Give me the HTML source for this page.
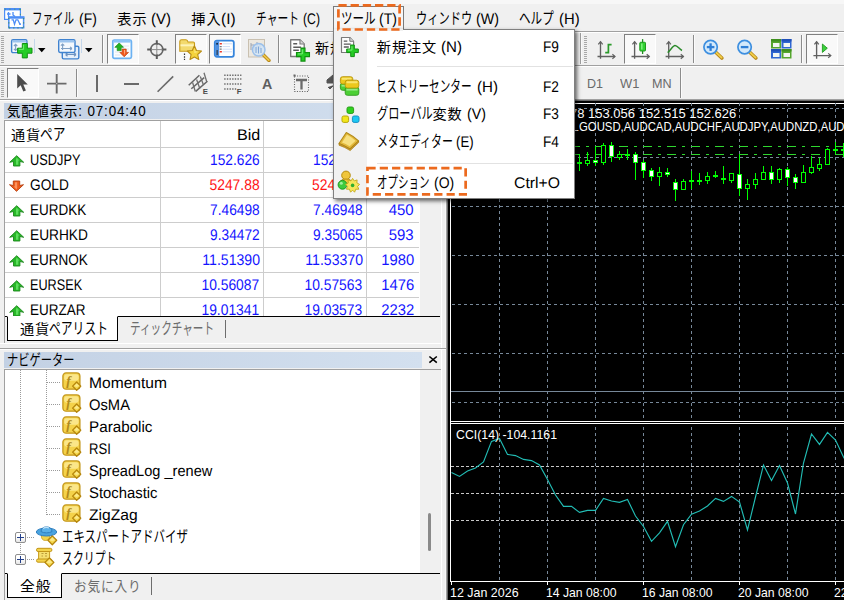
<!DOCTYPE html>
<html lang="ja"><head><meta charset="utf-8"><title>MetaTrader 4</title>
<style>
html,body{margin:0;padding:0}
body{width:844px;height:600px;position:relative;overflow:hidden;background:#f0f0f0;font-family:"Liberation Sans", "Noto Sans CJK JP", sans-serif;}
body div, body svg{position:absolute;box-sizing:border-box}
.t{position:absolute;white-space:nowrap;line-height:24px;height:24px;display:block}
#chart .t{font-family:"Liberation Sans","DejaVu Sans",sans-serif}
</style></head><body>
<div style="left:0px;top:0px;width:844px;height:4px;background:#f7f7f7"></div>
<div style="left:0px;top:31px;width:844px;height:1px;background:#a0a0a0"></div>
<div style="left:0px;top:32px;width:844px;height:1px;background:#fff"></div>
<div style="left:0px;top:65px;width:844px;height:1px;background:#a0a0a0"></div>
<div style="left:0px;top:66px;width:844px;height:1px;background:#fff"></div>
<div style="left:0px;top:99px;width:844px;height:1px;background:#a0a0a0"></div>
<div style="left:0px;top:100px;width:448px;height:1px;background:#fff"></div>
<span id="t0" class="t" style="left:32.4px;top:6.5px;font-size:15.6px;color:#000;transform:scaleX(0.6732);transform-origin:left center;">ファイル</span>
<span id="t1" class="t" style="left:78.6px;top:6.5px;font-size:15.4px;color:#000;transform:scaleX(0.9046) skewX(0.05deg);transform-origin:left center;">(F)</span>
<span id="t2" class="t" style="left:117.3px;top:6.5px;font-size:14.2px;color:#000;letter-spacing:0.9px;">表示</span>
<span id="t3" class="t" style="left:151.1px;top:6.5px;font-size:15.4px;color:#000;transform:scaleX(0.9731) skewX(0.05deg);transform-origin:left center;">(V)</span>
<span id="t4" class="t" style="left:191.3px;top:6.5px;font-size:14.2px;color:#000;letter-spacing:0.9px;">挿入</span><span id="t5" class="t" style="left:221px;top:6.5px;font-size:15.4px;color:#000;transform:scaleX(1.0033) skewX(0.05deg);transform-origin:left center;">(I)</span>
<span id="t6" class="t" style="left:255.5px;top:6.5px;font-size:15.6px;color:#000;transform:scaleX(0.6909);transform-origin:left center;">チャート</span>
<span id="t7" class="t" style="left:302.6px;top:6.5px;font-size:15.4px;color:#000;transform:scaleX(0.7945) skewX(0.05deg);transform-origin:left center;">(C)</span>
<span id="t8" class="t" style="left:415.8px;top:6.5px;font-size:15.6px;color:#000;transform:scaleX(0.7207);transform-origin:left center;">ウィンドウ</span>
<span id="t9" class="t" style="left:475.6px;top:6.5px;font-size:15.4px;color:#000;transform:scaleX(0.9273) skewX(0.05deg);transform-origin:left center;">(W)</span>
<span id="t10" class="t" style="left:519px;top:6.5px;font-size:15.6px;color:#000;transform:scaleX(0.7436);transform-origin:left center;">ヘルプ</span>
<span id="t11" class="t" style="left:558.6px;top:6.5px;font-size:15.4px;color:#000;transform:scaleX(0.9628) skewX(0.05deg);transform-origin:left center;">(H)</span>
<svg style="left:3px;top:6px" width="23" height="24" viewBox="0 0 23 24" ><rect x="1.600" y="2.600" width="15.800" height="10.800" fill="#fff" stroke="#4d8df6" stroke-width="1.200"/><rect x="1" y="2" width="17" height="2.400" fill="#4d8df6"/><path d="M1.600 3.200 H17.400 M17.400 3 V13" stroke="#3f9a7a" stroke-width="1" stroke-dasharray="1.200 3.600" fill="none"/><path d="M5.500 6 V11 M4 8 H7.500 M10 6 V9 L12 10.500" stroke="#4d8df6" stroke-width="1.300" fill="none"/><rect x="5.800" y="11.200" width="14.800" height="10.600" fill="#fff" stroke="#4d8df6" stroke-width="1.500"/><rect x="5" y="10.400" width="16.400" height="2.300" fill="#4d8df6"/><path d="M5.800 12 V22 M20.600 12 V22 M6 21.800 H20.500" stroke="#3f8f7a" stroke-width="1.200" stroke-dasharray="1.200 3" fill="none"/><path d="M8.500 13.800 H10.300 L11.500 18.300 L13 13.800 H14.800 L16.800 18" stroke="#4d8df6" stroke-width="1.300" fill="none"/><rect x="16.200" y="17.300" width="1.700" height="1.700" fill="#4d8df6"/></svg>
<div style="left:1px;top:36px;width:3px;height:27px;background:repeating-linear-gradient(180deg,#a8a8a8 0 1px,transparent 1px 2px)"></div>
<svg style="left:10px;top:38px" width="24" height="22" viewBox="0 0 24 22" ><rect x="1.600" y="1.800" width="15.300" height="12.800" rx="1.400" fill="#f4f8fd" stroke="#3f82cf" stroke-width="1.400"/><rect x="2.300" y="2.300" width="14" height="2.200" fill="#9cc4ee"/><path d="M5.600 6.300 V12.300 M3.900 8 L5.600 6.300 L7.300 8 M3.900 10.800 L5.600 12.500 L7.300 10.800" stroke="#7f9fc4" stroke-width="1.100" fill="none"/><path d="M12.3 5.499999999999999 h5 v4.7 h4.7 v5 h-4.7 v4.7 h-5 v-4.7 h-4.7 v-5 h4.7 z" fill="#25cc25" stroke="#109010" stroke-width="1"/><path d="M13.5 6.699999999999999 v4.7 M8.8 11.399999999999999 h4.7" stroke="#7df07d" stroke-width="1.200" fill="none" opacity=".8"/></svg>
<div style="left:34px;top:39px;width:1px;height:14px;background:#c4d6ea"></div>
<svg style="left:38px;top:48px" width="8" height="5" viewBox="0 0 8 5" ><path d="M0 0 H7.500 L3.750 4.200Z" fill="#000"/></svg>
<svg style="left:57px;top:38px" width="24" height="23" viewBox="0 0 24 23" ><rect x="5.300" y="8.200" width="16.500" height="12.700" rx="1.400" fill="#e6f0fb" stroke="#3f82cf" stroke-width="1.400"/><path d="M8.500 16.500 H19 M8.500 16.500 l2 -1.700 M8.500 16.500 l2 1.700 M19 16.500 l-2 -1.700 M19 16.500 l-2 1.700" stroke="#6f93c0" stroke-width="1.200" fill="none"/><rect x="1.700" y="1.800" width="16.300" height="12.700" rx="1.400" fill="#f4f8fd" stroke="#3f82cf" stroke-width="1.400"/><rect x="2.400" y="2.300" width="15" height="2.200" fill="#9cc4ee"/><path d="M5.600 6 V12 M3.900 7.700 L5.600 6 L7.300 7.700 M4 10.500 H15 M15 10.500 l-2 -1.700 M15 10.500 l-2 1.700" stroke="#7f9fc4" stroke-width="1.100" fill="none"/></svg>
<div style="left:81px;top:39px;width:1px;height:14px;background:#c4d6ea"></div>
<svg style="left:85px;top:48px" width="8" height="5" viewBox="0 0 8 5" ><path d="M0 0 H7.500 L3.750 4.200Z" fill="#000"/></svg>
<div style="left:102px;top:35px;width:1px;height:28px;background:#8c8c8c"></div>
<div style="left:103px;top:35px;width:1px;height:28px;background:#fbfbfb"></div>
<div style="left:107px;top:34px;width:32px;height:30px;background:#f9f9f9;border:1px solid #808080;border-right-color:#fff;border-bottom-color:#fff"></div>
<svg style="left:111px;top:38px" width="22" height="22" viewBox="0 0 22 22" ><rect x="1.800" y="2" width="18.600" height="18.400" rx="1.600" fill="#fbfdff" stroke="#6cb2f2" stroke-width="1.700"/><rect x="2.500" y="2.400" width="17.200" height="2.200" fill="#8cc4f6"/><path d="M11 8 H18 M11 11 H18 M4 14 H9 M4 17 H9" stroke="#dfe6ee" stroke-width="1"/><path d="M8.200 4.900 L12.500 9.300 H10.200 V12.600 H6.200 V9.300 H3.900 Z" fill="#22b422" stroke="#178a17" stroke-width=".7"/><path d="M13.200 18.800 L17.500 14.400 H15.200 V11.100 H11.200 V14.400 H8.900 Z" fill="#f0591c" stroke="#c03d0a" stroke-width=".7"/><path d="M13.200 17.300 L14.200 14.400 V12 H13 Z" fill="#ffb08a"/></svg>
<svg style="left:146px;top:39px" width="22" height="22" viewBox="0 0 22 22" ><circle cx="10.800" cy="10.600" r="6.100" fill="none" stroke="#646464" stroke-width="1.600"/><path d="M10.800 1.200 V6 M10.800 15.200 V20 M1.200 10.600 H6 M15.600 10.600 H20.400" stroke="#5a5a5a" stroke-width="2"/><path d="M10.800 5 V16 M5 10.600 H16.500" stroke="#8a8a8a" stroke-width="1"/></svg>
<div style="left:175px;top:34px;width:32px;height:30px;background:#f9f9f9;border:1px solid #808080;border-right-color:#fff;border-bottom-color:#fff"></div>
<svg style="left:178px;top:38px" width="25" height="23" viewBox="0 0 25 23" ><path d="M1.800 3.500 q0 -1.800 1.800 -1.800 h4.400 q1.500 0 2 2.300 h5.200 q1.300 0 1.300 1.300 v8 h-14.700 z" fill="#f3da6e" stroke="#c79b1b" stroke-width="1.100"/><path d="M2.500 6.300 h13.300 v2 h-13.300z" fill="#fdf3b8"/><path d="M6.500 15.500 v1.500 M6.500 18.200 v1.500 M6.500 20.800 v1.200" stroke="#333" stroke-width="1.200"/><path d="M16.400 7.800 L18.500 12.500 L23.500 13 L19.700 16.500 L20.800 21.500 L16.400 19 L12 21.500 L13.100 16.500 L9.300 13 L14.300 12.500 Z" fill="#f5d33c" stroke="#b98d15" stroke-width="1.100" stroke-linejoin="round"/><path d="M16.400 10.500 L17.500 13.400 L20.500 13.800 L16.400 15 Z" fill="#fbe98a"/></svg>
<div style="left:209px;top:34px;width:32px;height:30px;background:#f9f9f9;border:1px solid #808080;border-right-color:#fff;border-bottom-color:#fff"></div>
<svg style="left:213px;top:39px" width="22" height="19" viewBox="0 0 22 19" ><rect x="1.800" y="1.600" width="19" height="16.200" rx="2" fill="#fff" stroke="#3685dc" stroke-width="1.800"/><rect x="2.200" y="2.200" width="4" height="15" fill="#4d8fe0"/><rect x="3.300" y="4" width="1.600" height="1.600" fill="#123"/><rect x="3.500" y="11" width="1.300" height="5" fill="#345"/><path d="M9.500 4.800 H19 M9.500 7.600 H17 M9.500 10.200 H19 M9.500 12.800 H19" stroke="#cfdcf6" stroke-width="1"/><path d="M6.700 4.800 h2.200 M6.700 12.800 h2.200" stroke="#ee3a2a" stroke-width="1.400"/><path d="M6.700 7.600 h2 M6.700 10.200 h2" stroke="#777" stroke-width="1.300"/></svg>
<svg style="left:247px;top:38px" width="24" height="24" viewBox="0 0 24 24" ><rect x="1.500" y="1.500" width="16" height="17.500" fill="#ece8e0" stroke="#c9c0b0" stroke-width="1"/><path d="M4 12 V5 M4 7 h3 v6 M10 4 v8 M10 6 h3 v5" stroke="#9aa4b4" fill="none"/><path d="M16.500 17 L22 22.500" stroke="#b98a1c" stroke-width="3.400" stroke-linecap="round"/><path d="M16.500 17 L21.800 22.200" stroke="#efc84a" stroke-width="1.700" stroke-linecap="round"/><circle cx="11.700" cy="11.800" r="6.300" fill="#cfe4f8" fill-opacity=".8" stroke="#9cc0ea" stroke-width="1.500"/><path d="M9 9 v6 M11.500 8.500 v7 M14 10 v5" stroke="#7fa6d8" fill="none"/></svg>
<div style="left:278px;top:35px;width:1px;height:28px;background:#8c8c8c"></div>
<div style="left:279px;top:35px;width:1px;height:28px;background:#fbfbfb"></div>
<svg style="left:288.5px;top:37.8px" width="23.5" height="25.8" viewBox="0 0 21 23"><path d="M1.500 1.500 h8.300 l3.800 3.800 v11.200 h-12.100 z" fill="#fdfdfd" stroke="#7a7a7a" stroke-width="1.200" stroke-linejoin="round"/><path d="M9.800 1.500 v3.800 h3.800" fill="#d8d8d8" stroke="#7a7a7a" stroke-width="1"/><path d="M3.800 5.200 h3.500 M3.800 8.200 h7 M3.800 11 h5" stroke="#5a5a5a" stroke-width="1.300"/><path d="M10.7 9.0 h3.6 v4.0 h4.0 v3.6 h-4.0 v4.0 h-3.6 v-4.0 h-4.0 v-3.6 h4.0 z" fill="#25cc25" stroke="#109010" stroke-width="1"/><path d="M11.899999999999999 10.2 v4.0 M7.9 14.2 h4.0" stroke="#7df07d" stroke-width="1.200" fill="none" opacity=".8"/></svg>
<span id="t12" class="t" style="left:314.6px;top:36.2px;font-size:14.2px;color:#000;transform:scaleX(0.9940);transform-origin:left center;letter-spacing:0.9px;">新規注文</span>
<div style="left:580px;top:33px;width:1px;height:31px;background:#a0a0a0"></div>
<div style="left:581px;top:33px;width:1px;height:31px;background:#fbfbfb"></div>
<div style="left:584px;top:36px;width:3px;height:27px;background:repeating-linear-gradient(180deg,#a8a8a8 0 1px,transparent 1px 2px)"></div>
<svg style="left:596px;top:40px" width="21" height="20" viewBox="0 0 21 20" ><path d="M4.5 1.7 V18.7 M1.5 16.5 H19" stroke="#606060" stroke-width="1.350" fill="none"/><path d="M2.3 4.3 L4.5 1.7 L6.7 4.3 M16.4 14.3 L19 16.5 L16.4 18.7" stroke="#606060" stroke-width="1.200" fill="none"/><path d="M9.200 12.600 H12.400 V4.600 H15.600" stroke="#2b9a2b" stroke-width="1.700" fill="none"/></svg>
<div style="left:624px;top:34px;width:32px;height:30px;background:#f9f9f9;border:1px solid #808080;border-right-color:#fff;border-bottom-color:#fff"></div>
<svg style="left:630px;top:38px" width="21" height="22" viewBox="0 0 21 22" ><path d="M4.6 3.7 V20.7 M1.5 18.5 H19.3" stroke="#606060" stroke-width="1.350" fill="none"/><path d="M2.3999999999999995 6.300000000000001 L4.6 3.7 L6.8 6.300000000000001 M16.7 16.3 L19.3 18.5 L16.7 20.7" stroke="#606060" stroke-width="1.200" fill="none"/><path d="M12.600 1.100 V16" stroke="#1f8f1f" stroke-width="1.300"/><rect x="9.800" y="4.300" width="5.700" height="8.700" rx=".8" fill="#32d232" stroke="#1f9a1f" stroke-width="1"/><rect x="11" y="5.500" width="1.600" height="6" fill="#7bf07b"/></svg>
<svg style="left:664px;top:40px" width="21" height="20" viewBox="0 0 21 20" ><path d="M4.7 1.7 V18.7 M1.6 16.5 H19.4" stroke="#606060" stroke-width="1.350" fill="none"/><path d="M2.5 4.3 L4.7 1.7 L6.9 4.3 M16.799999999999997 14.3 L19.4 16.5 L16.799999999999997 18.7" stroke="#606060" stroke-width="1.200" fill="none"/><path d="M3.700 12.600 C7 9.500 9 5.500 11 5.500 C13.500 5.500 15 9 18 10.500" stroke="#2b8a2b" stroke-width="1.500" fill="none"/></svg>
<div style="left:693px;top:35px;width:1px;height:28px;background:#8c8c8c"></div>
<div style="left:694px;top:35px;width:1px;height:28px;background:#fbfbfb"></div>
<svg style="left:702px;top:38px" width="22" height="22" viewBox="0 0 22 22" ><path d="M14 14.500 L19.800 20" stroke="#b98a1c" stroke-width="3.600" stroke-linecap="round"/><path d="M14 14.300 L19.600 19.600" stroke="#f2cf4a" stroke-width="1.800" stroke-linecap="round"/><circle cx="8.600" cy="9.100" r="6.700" fill="#d3e9fb" stroke="#3d8fe0" stroke-width="1.700"/><path d="M4.800 9.100 H12.400" stroke="#2f7fd6" stroke-width="2.300"/><path d="M8.600 5.300 V12.900" stroke="#2f7fd6" stroke-width="2.300"/></svg>
<svg style="left:736px;top:38px" width="22" height="22" viewBox="0 0 22 22" ><path d="M14 14.500 L19.800 20" stroke="#b98a1c" stroke-width="3.600" stroke-linecap="round"/><path d="M14 14.300 L19.600 19.600" stroke="#f2cf4a" stroke-width="1.800" stroke-linecap="round"/><circle cx="8.600" cy="9.100" r="6.700" fill="#d3e9fb" stroke="#3d8fe0" stroke-width="1.700"/><path d="M4.800 9.100 H12.400" stroke="#2f7fd6" stroke-width="2.300"/></svg>
<svg style="left:771px;top:39px" width="21" height="20" viewBox="0 0 21 20" ><rect x="0" y="0" width="10" height="9.500" fill="#55a62e"/><rect x="0" y="0" width="10" height="2.500" fill="#3f8f1e"/><rect x="2" y="4" width="6.500" height="4" fill="#f2f6f2"/><rect x="10.5" y="0" width="10" height="9.500" fill="#2f66d2"/><rect x="10.5" y="0" width="10" height="2.500" fill="#2050b8"/><rect x="12.5" y="4" width="6.500" height="4" fill="#f2f6f2"/><rect x="0" y="10" width="10" height="9.500" fill="#2f66d2"/><rect x="0" y="10" width="10" height="2.500" fill="#2050b8"/><rect x="2" y="14" width="6.500" height="4" fill="#f2f6f2"/><rect x="10.5" y="10" width="10" height="9.500" fill="#55a62e"/><rect x="10.5" y="10" width="10" height="2.500" fill="#3f8f1e"/><rect x="12.5" y="14" width="6.500" height="4" fill="#f2f6f2"/></svg>
<div style="left:801px;top:35px;width:1px;height:28px;background:#8c8c8c"></div>
<div style="left:802px;top:35px;width:1px;height:28px;background:#fbfbfb"></div>
<div style="left:806px;top:34px;width:32px;height:30px;background:#f9f9f9;border:1px solid #808080;border-right-color:#fff;border-bottom-color:#fff"></div>
<svg style="left:812px;top:40px" width="21" height="20" viewBox="0 0 21 20" ><path d="M4.6 1.8 V18.7 M1.4 15.6 H18.8" stroke="#606060" stroke-width="1.350" fill="none"/><path d="M2.3999999999999995 4.4 L4.6 1.8 L6.8 4.4 M16.2 13.399999999999999 L18.8 15.6 L16.2 17.8" stroke="#606060" stroke-width="1.200" fill="none"/><path d="M10.400 4 L15.300 8.200 L10.400 12.400 Z" fill="#3bd03b" stroke="#239a23" stroke-width=".9"/></svg>
<div style="left:1px;top:70px;width:3px;height:27px;background:repeating-linear-gradient(180deg,#a8a8a8 0 1px,transparent 1px 2px)"></div>
<div style="left:7px;top:68px;width:32px;height:30px;background:#f9f9f9;border:1px solid #808080;border-right-color:#fff;border-bottom-color:#fff"></div>
<svg style="left:16px;top:73px" width="13" height="20" viewBox="0 0 13 20" ><path d="M1.200 1 V15.600 L4.700 12.300 L7.300 18.600 L9.900 17.500 L7.300 11.400 H11.800 Z" fill="#4d4d4d"/></svg>
<svg style="left:46px;top:73px" width="22" height="22" viewBox="0 0 22 22" ><path d="M10.700 1 V20.400 M1 10.600 H20.500" stroke="#6a6a6a" stroke-width="1.900"/><rect x="10.200" y="10.100" width="1" height="1" fill="#ddd"/></svg>
<div style="left:76px;top:69px;width:1px;height:28px;background:#8c8c8c"></div>
<div style="left:77px;top:69px;width:1px;height:28px;background:#fbfbfb"></div>
<div style="left:96px;top:75px;width:2px;height:17px;background:#6a6a6a"></div>
<div style="left:124px;top:82.5px;width:15px;height:2px;background:#6a6a6a"></div>
<svg style="left:156px;top:74px" width="19" height="19" viewBox="0 0 19 19" ><path d="M1.600 17.800 L17.200 2.400" stroke="#6a6a6a" stroke-width="1.600"/></svg>
<svg style="left:187px;top:71px" width="23" height="25" viewBox="0 0 23 25" ><path d="M1.700 14.300 L12.400 4.300 M8.700 20.400 L20.400 10.200 M4.300 17.800 L17.200 6.600" stroke="#666" stroke-width="1.500" fill="none"/><path d="M5.600 11.500 L8.300 20.500 M9.600 8.500 L12.800 17.500 M13.300 5.500 L16.500 14 M17 1.800 L19.800 11" stroke="#6e6e6e" stroke-width="1.300"/><text x="15.800" y="23.300" font-size="7.800" font-weight="bold" fill="#4a4a4a" font-family="Liberation Sans, sans-serif">E</text></svg>
<svg style="left:223px;top:72px" width="21" height="24" viewBox="0 0 21 24" ><path d="M1.200 3.200 H18.400 M1.200 6.900 H18.400 M1.200 11.900 H18.400 M1.200 16.900 H13.800" stroke="#6a6a6a" stroke-width="1.500" stroke-dasharray="1.400 1.250"/><text x="13.800" y="22.300" font-size="7.800" font-weight="bold" fill="#4a4a4a" font-family="Liberation Sans, sans-serif">F</text></svg>
<span id="t13" class="t" style="left:261.8px;top:72.0px;font-size:14.6px;color:#5e5e5e;transform:scaleX(0.9766);transform-origin:left center;font-weight:bold;">A</span>
<svg style="left:292px;top:73px" width="19" height="21" viewBox="0 0 19 21" ><rect x="2.500" y="3" width="14" height="15.500" fill="none" stroke="#666" stroke-width="1.100" stroke-dasharray="1.100 1.400"/><rect x="1.500" y="1.500" width="2" height="2" fill="#666"/><path d="M4 7 H15 M9.500 7 V16.500" stroke="#6a6a6a" stroke-width="2.300" fill="none"/></svg>
<svg style="left:325px;top:74px" width="10" height="20" viewBox="0 0 10 20" ><path d="M8 1 L2 6 L8 6 Z M2 6 h8 v3 h-8z M9 11 l-4 4 l-2 -2" fill="#555" stroke="#555" stroke-width="1"/></svg>
<span id="t14" class="t" style="left:586.6px;top:71.6px;font-size:13px;color:#6a6a6a;transform:scaleX(0.9624);transform-origin:left center;">D1</span>
<span id="t15" class="t" style="left:620px;top:71.6px;font-size:13px;color:#6a6a6a;transform:scaleX(0.9897);transform-origin:left center;">W1</span>
<span id="t16" class="t" style="left:652.2px;top:71.6px;font-size:13px;color:#6a6a6a;transform:scaleX(0.9694);transform-origin:left center;">MN</span>
<div style="left:680px;top:68px;width:1px;height:30px;background:#8c8c8c"></div>
<div style="left:681px;top:68px;width:1px;height:30px;background:#fbfbfb"></div>
<div style="left:4px;top:103px;width:437px;height:16px;background:linear-gradient(90deg,#c3d1e4,#d3e0ef)"></div>
<span id="t17" class="t" style="left:7.3px;top:99.0px;font-size:14.2px;color:#000;transform:scaleX(0.9454);transform-origin:left center;letter-spacing:0.9px;">気配値表示: 07:04:40</span>
<div style="left:4px;top:120px;width:437px;height:224px;border-left:1px solid #a0a0a0;border-top:1px solid #a0a0a0;background:#f0f0f0"></div>
<div style="left:5px;top:121px;width:415px;height:195px;background:#fff"></div>
<div style="left:441px;top:100px;width:1px;height:500px;background:#fff"></div>
<div style="left:445px;top:100px;width:1px;height:500px;background:#f8f8f8"></div>
<div style="left:5px;top:147px;width:414px;height:1px;background:#cdcdcd"></div>
<div style="left:5px;top:172px;width:414px;height:1px;background:#cdcdcd"></div>
<div style="left:5px;top:197px;width:414px;height:1px;background:#cdcdcd"></div>
<div style="left:5px;top:222px;width:414px;height:1px;background:#cdcdcd"></div>
<div style="left:5px;top:247px;width:414px;height:1px;background:#cdcdcd"></div>
<div style="left:5px;top:272px;width:414px;height:1px;background:#cdcdcd"></div>
<div style="left:5px;top:297px;width:414px;height:1px;background:#cdcdcd"></div>
<div style="left:160px;top:121px;width:1px;height:195px;background:#cdcdcd"></div>
<div style="left:263px;top:121px;width:1px;height:195px;background:#cdcdcd"></div>
<div style="left:366px;top:121px;width:1px;height:195px;background:#cdcdcd"></div>
<span id="t18" class="t" style="left:11px;top:122.5px;font-size:14.2px;color:#000;letter-spacing:0.9px;">通貨</span><span id="t19" class="t" style="left:40px;top:122.5px;font-size:15.6px;color:#000;transform:scaleX(0.8172);transform-origin:left center;">ペア</span>
<span id="t20" class="t" style="right:584px;top:122.80000000000001px;font-size:15.4px;color:#000;transform:scaleX(1.0507) skewX(0.05deg);transform-origin:right center;">Bid</span>
<span id="t21" class="t" style="left:30px;top:148.0px;font-size:15.4px;color:#000;transform:scaleX(0.8312) skewX(0.05deg);transform-origin:left center;">USDJPY</span>
<span id="t22" class="t" style="right:584.4px;top:148.0px;font-size:15.4px;color:#1414ff;transform:scaleX(0.8911) skewX(0.05deg);transform-origin:right center;">152.626</span>
<span id="t23" class="t" style="left:313.0px;top:148.0px;font-size:15.4px;color:#1414ff;transform:scaleX(0.8908) skewX(0.05deg);transform-origin:left center;">152</span>
<svg style="left:9.2px;top:155px" width="16" height="12" viewBox="0 0 16 12" ><path d="M7.700 0.700 L14.700 7.300 L10.900 6.500 V11 H4.500 V6.500 L0.700 7.300 Z" fill="#27b827" stroke="#1c861c" stroke-width="0.900" stroke-linejoin="round"/><path d="M7.700 2.600 L10.400 5.600 L9.300 5.600 V9.800 H7 V4 Z" fill="#6fe96f" opacity=".75"/></svg>
<span id="t24" class="t" style="left:30px;top:173.0px;font-size:15.4px;color:#000;transform:scaleX(0.8890) skewX(0.05deg);transform-origin:left center;">GOLD</span>
<span id="t25" class="t" style="right:584.4px;top:173.0px;font-size:15.4px;color:#ff1414;transform:scaleX(0.9019) skewX(0.05deg);transform-origin:right center;">5247.88</span>
<span id="t26" class="t" style="left:312.40000000000003px;top:173.0px;font-size:15.4px;color:#ff1414;transform:scaleX(0.9024) skewX(0.05deg);transform-origin:left center;">524</span>
<svg style="left:9.2px;top:180px" width="16" height="12" viewBox="0 0 16 12" ><path d="M7.500 11.300 L14.500 4.700 L10.700 5.500 V1 H4.300 V5.500 L0.500 4.700 Z" fill="#ee5a1a" stroke="#b5400f" stroke-width="0.900" stroke-linejoin="round"/><path d="M7.500 9.400 L4.800 6.400 L5.900 6.400 V2.200 H8.200 V8 Z" fill="#ffa574" opacity=".75"/></svg>
<span id="t27" class="t" style="left:30px;top:198.0px;font-size:15.4px;color:#000;transform:scaleX(0.8759) skewX(0.05deg);transform-origin:left center;">EURDKK</span>
<span id="t28" class="t" style="right:584.4px;top:198.0px;font-size:15.4px;color:#1414ff;transform:scaleX(0.8911) skewX(0.05deg);transform-origin:right center;">7.46498</span>
<span id="t29" class="t" style="right:481.4px;top:198.0px;font-size:15.4px;color:#1414ff;transform:scaleX(0.8911) skewX(0.05deg);transform-origin:right center;">7.46948</span>
<span id="t30" class="t" style="right:430.2px;top:198.0px;font-size:15.4px;color:#1414ff;transform:scaleX(0.9724) skewX(0.05deg);transform-origin:right center;">450</span>
<svg style="left:9.2px;top:205px" width="16" height="12" viewBox="0 0 16 12" ><path d="M7.700 0.700 L14.700 7.300 L10.900 6.500 V11 H4.500 V6.500 L0.700 7.300 Z" fill="#27b827" stroke="#1c861c" stroke-width="0.900" stroke-linejoin="round"/><path d="M7.700 2.600 L10.400 5.600 L9.300 5.600 V9.800 H7 V4 Z" fill="#6fe96f" opacity=".75"/></svg>
<span id="t31" class="t" style="left:30px;top:223.0px;font-size:15.4px;color:#000;transform:scaleX(0.8905) skewX(0.05deg);transform-origin:left center;">EURHKD</span>
<span id="t32" class="t" style="right:584.4px;top:223.0px;font-size:15.4px;color:#1414ff;transform:scaleX(0.8911) skewX(0.05deg);transform-origin:right center;">9.34472</span>
<span id="t33" class="t" style="right:481.4px;top:223.0px;font-size:15.4px;color:#1414ff;transform:scaleX(0.8911) skewX(0.05deg);transform-origin:right center;">9.35065</span>
<span id="t34" class="t" style="right:430.2px;top:223.0px;font-size:15.4px;color:#1414ff;transform:scaleX(0.9724) skewX(0.05deg);transform-origin:right center;">593</span>
<svg style="left:9.2px;top:230px" width="16" height="12" viewBox="0 0 16 12" ><path d="M7.700 0.700 L14.700 7.300 L10.900 6.500 V11 H4.500 V6.500 L0.700 7.300 Z" fill="#27b827" stroke="#1c861c" stroke-width="0.900" stroke-linejoin="round"/><path d="M7.700 2.600 L10.400 5.600 L9.300 5.600 V9.800 H7 V4 Z" fill="#6fe96f" opacity=".75"/></svg>
<span id="t35" class="t" style="left:30px;top:248.0px;font-size:15.4px;color:#000;transform:scaleX(0.8789) skewX(0.05deg);transform-origin:left center;">EURNOK</span>
<span id="t36" class="t" style="right:584.4px;top:248.0px;font-size:15.4px;color:#1414ff;transform:scaleX(0.9162) skewX(0.05deg);transform-origin:right center;">11.51390</span>
<span id="t37" class="t" style="right:481.4px;top:248.0px;font-size:15.4px;color:#1414ff;transform:scaleX(0.9162) skewX(0.05deg);transform-origin:right center;">11.53370</span>
<span id="t38" class="t" style="right:430.2px;top:248.0px;font-size:15.4px;color:#1414ff;transform:scaleX(0.9629) skewX(0.05deg);transform-origin:right center;">1980</span>
<svg style="left:9.2px;top:255px" width="16" height="12" viewBox="0 0 16 12" ><path d="M7.700 0.700 L14.700 7.300 L10.900 6.500 V11 H4.500 V6.500 L0.700 7.300 Z" fill="#27b827" stroke="#1c861c" stroke-width="0.900" stroke-linejoin="round"/><path d="M7.700 2.600 L10.400 5.600 L9.300 5.600 V9.800 H7 V4 Z" fill="#6fe96f" opacity=".75"/></svg>
<span id="t39" class="t" style="left:30px;top:273.0px;font-size:15.4px;color:#000;transform:scaleX(0.8228) skewX(0.05deg);transform-origin:left center;">EURSEK</span>
<span id="t40" class="t" style="right:584.4px;top:273.0px;font-size:15.4px;color:#1414ff;transform:scaleX(0.9000) skewX(0.05deg);transform-origin:right center;">10.56087</span>
<span id="t41" class="t" style="right:481.4px;top:273.0px;font-size:15.4px;color:#1414ff;transform:scaleX(0.9000) skewX(0.05deg);transform-origin:right center;">10.57563</span>
<span id="t42" class="t" style="right:430.2px;top:273.0px;font-size:15.4px;color:#1414ff;transform:scaleX(0.9629) skewX(0.05deg);transform-origin:right center;">1476</span>
<svg style="left:9.2px;top:280px" width="16" height="12" viewBox="0 0 16 12" ><path d="M7.700 0.700 L14.700 7.300 L10.900 6.500 V11 H4.500 V6.500 L0.700 7.300 Z" fill="#27b827" stroke="#1c861c" stroke-width="0.900" stroke-linejoin="round"/><path d="M7.700 2.600 L10.400 5.600 L9.300 5.600 V9.800 H7 V4 Z" fill="#6fe96f" opacity=".75"/></svg>
<span id="t43" class="t" style="left:30px;top:298.0px;font-size:15.4px;color:#000;transform:scaleX(0.8752) skewX(0.05deg);transform-origin:left center;">EURZAR</span>
<span id="t44" class="t" style="right:584.4px;top:298.0px;font-size:15.4px;color:#1414ff;transform:scaleX(0.9000) skewX(0.05deg);transform-origin:right center;">19.01341</span>
<span id="t45" class="t" style="right:481.4px;top:298.0px;font-size:15.4px;color:#1414ff;transform:scaleX(0.9000) skewX(0.05deg);transform-origin:right center;">19.03573</span>
<span id="t46" class="t" style="right:430.2px;top:298.0px;font-size:15.4px;color:#1414ff;transform:scaleX(0.9629) skewX(0.05deg);transform-origin:right center;">2232</span>
<svg style="left:9.2px;top:305px" width="16" height="12" viewBox="0 0 16 12" ><path d="M7.700 0.700 L14.700 7.300 L10.900 6.500 V11 H4.500 V6.500 L0.700 7.300 Z" fill="#27b827" stroke="#1c861c" stroke-width="0.900" stroke-linejoin="round"/><path d="M7.700 2.600 L10.400 5.600 L9.300 5.600 V9.800 H7 V4 Z" fill="#6fe96f" opacity=".75"/></svg>
<div style="left:5px;top:317px;width:436px;height:27px;background:#f0f0f0"></div>
<div style="left:5px;top:316px;width:435px;height:1px;background:#000"></div>
<div style="left:7px;top:316px;width:111px;height:25px;background:#fff;border:1px solid #000;border-top:1px solid #fff"></div>
<span id="t47" class="t" style="left:20px;top:316.5px;font-size:14.2px;color:#000;letter-spacing:0.9px;">通貨</span><span id="t48" class="t" style="left:48.8px;top:316.5px;font-size:15.6px;color:#000;transform:scaleX(0.7566);transform-origin:left center;">ペアリスト</span>
<span id="t49" class="t" style="left:130.3px;top:316.5px;font-size:15.6px;color:#6d6d6d;transform:scaleX(0.6792);transform-origin:left center;">ティックチャート</span>
<div style="left:225px;top:320px;width:1px;height:18px;background:#6d6d6d"></div>
<div style="left:0px;top:343px;width:441px;height:1px;background:#fff"></div>
<div style="left:0px;top:348px;width:446px;height:1px;background:#a0a0a0"></div>
<div style="left:0px;top:349px;width:446px;height:1px;background:#fff"></div>
<div style="left:4px;top:352px;width:418px;height:16px;background:linear-gradient(90deg,#c3d1e4,#d3e0ef)"></div>
<span id="t50" class="t" style="left:6.8px;top:348.2px;font-size:14.4px;color:#000;transform:scaleX(0.7816);transform-origin:left center;">ナビゲーター</span>
<svg style="left:428px;top:355px" width="10" height="9" viewBox="0 0 10 9"><path d="M1.400 1.500 L8.800 7.600 M8.800 1.500 L1.400 7.600" stroke="#000" stroke-width="1.600" fill="none"/></svg>
<div style="left:4px;top:369px;width:437px;height:231px;border-left:1px solid #a0a0a0;border-top:1px solid #a0a0a0;background:#f0f0f0"></div>
<div style="left:5px;top:370px;width:415px;height:203px;background:#fff"></div>
<div style="left:428px;top:513px;width:3px;height:38px;background:#8a8a8a;border-radius:1.5px"></div>
<div style="left:20px;top:370px;width:1px;height:184px;background:repeating-linear-gradient(180deg,#9a9a9a 0 1px,transparent 1px 2px)"></div>
<div style="left:46px;top:370px;width:1px;height:145px;background:repeating-linear-gradient(180deg,#9a9a9a 0 1px,transparent 1px 2px)"></div>
<div style="left:47px;top:382px;width:14px;height:1px;background:repeating-linear-gradient(90deg,#9a9a9a 0 1px,transparent 1px 2px)"></div>
<svg style="left:62px;top:372px" width="20" height="20" viewBox="0 0 20 20" ><rect x="0.900" y="0.900" width="17" height="16.300" rx="3.200" fill="#f4d24a" stroke="#c3961a" stroke-width="1.300"/><rect x="2.200" y="2.200" width="14.400" height="6.500" rx="2.400" fill="#fbea94" opacity=".85"/><text x="4.300" y="13.300" font-family="Liberation Serif, serif" font-style="italic" font-weight="bold" font-size="13.500" fill="#b08a1c">f</text><path d="M14.7 10.0 L18.799999999999997 14.1 L14.7 18.2 L10.6 14.1 Z" fill="#f6d84c" stroke="#b5850d" stroke-width="1.300" stroke-linejoin="round"/><path d="M14.7 11.6 L17.199999999999996 14.1 L14.7 15.1 L12.2 14.1 Z" fill="#fbe98c"/></svg>
<span id="t51" class="t" style="left:89px;top:370.8px;font-size:15.4px;color:#000;transform:scaleX(1.0129) skewX(0.05deg);transform-origin:left center;">Momentum</span>
<div style="left:47px;top:404px;width:14px;height:1px;background:repeating-linear-gradient(90deg,#9a9a9a 0 1px,transparent 1px 2px)"></div>
<svg style="left:62px;top:394px" width="20" height="20" viewBox="0 0 20 20" ><rect x="0.900" y="0.900" width="17" height="16.300" rx="3.200" fill="#f4d24a" stroke="#c3961a" stroke-width="1.300"/><rect x="2.200" y="2.200" width="14.400" height="6.500" rx="2.400" fill="#fbea94" opacity=".85"/><text x="4.300" y="13.300" font-family="Liberation Serif, serif" font-style="italic" font-weight="bold" font-size="13.500" fill="#b08a1c">f</text><path d="M14.7 10.0 L18.799999999999997 14.1 L14.7 18.2 L10.6 14.1 Z" fill="#f6d84c" stroke="#b5850d" stroke-width="1.300" stroke-linejoin="round"/><path d="M14.7 11.6 L17.199999999999996 14.1 L14.7 15.1 L12.2 14.1 Z" fill="#fbe98c"/></svg>
<span id="t52" class="t" style="left:89px;top:392.8px;font-size:15.4px;color:#000;transform:scaleX(0.9582) skewX(0.05deg);transform-origin:left center;">OsMA</span>
<div style="left:47px;top:426px;width:14px;height:1px;background:repeating-linear-gradient(90deg,#9a9a9a 0 1px,transparent 1px 2px)"></div>
<svg style="left:62px;top:416px" width="20" height="20" viewBox="0 0 20 20" ><rect x="0.900" y="0.900" width="17" height="16.300" rx="3.200" fill="#f4d24a" stroke="#c3961a" stroke-width="1.300"/><rect x="2.200" y="2.200" width="14.400" height="6.500" rx="2.400" fill="#fbea94" opacity=".85"/><text x="4.300" y="13.300" font-family="Liberation Serif, serif" font-style="italic" font-weight="bold" font-size="13.500" fill="#b08a1c">f</text><path d="M14.7 10.0 L18.799999999999997 14.1 L14.7 18.2 L10.6 14.1 Z" fill="#f6d84c" stroke="#b5850d" stroke-width="1.300" stroke-linejoin="round"/><path d="M14.7 11.6 L17.199999999999996 14.1 L14.7 15.1 L12.2 14.1 Z" fill="#fbe98c"/></svg>
<span id="t53" class="t" style="left:89px;top:414.8px;font-size:15.4px;color:#000;transform:scaleX(0.9892) skewX(0.05deg);transform-origin:left center;">Parabolic</span>
<div style="left:47px;top:448px;width:14px;height:1px;background:repeating-linear-gradient(90deg,#9a9a9a 0 1px,transparent 1px 2px)"></div>
<svg style="left:62px;top:438px" width="20" height="20" viewBox="0 0 20 20" ><rect x="0.900" y="0.900" width="17" height="16.300" rx="3.200" fill="#f4d24a" stroke="#c3961a" stroke-width="1.300"/><rect x="2.200" y="2.200" width="14.400" height="6.500" rx="2.400" fill="#fbea94" opacity=".85"/><text x="4.300" y="13.300" font-family="Liberation Serif, serif" font-style="italic" font-weight="bold" font-size="13.500" fill="#b08a1c">f</text><path d="M14.7 10.0 L18.799999999999997 14.1 L14.7 18.2 L10.6 14.1 Z" fill="#f6d84c" stroke="#b5850d" stroke-width="1.300" stroke-linejoin="round"/><path d="M14.7 11.6 L17.199999999999996 14.1 L14.7 15.1 L12.2 14.1 Z" fill="#fbe98c"/></svg>
<span id="t54" class="t" style="left:89px;top:436.8px;font-size:15.4px;color:#000;transform:scaleX(0.8490) skewX(0.05deg);transform-origin:left center;">RSI</span>
<div style="left:47px;top:470px;width:14px;height:1px;background:repeating-linear-gradient(90deg,#9a9a9a 0 1px,transparent 1px 2px)"></div>
<svg style="left:62px;top:460px" width="20" height="20" viewBox="0 0 20 20" ><rect x="0.900" y="0.900" width="17" height="16.300" rx="3.200" fill="#f4d24a" stroke="#c3961a" stroke-width="1.300"/><rect x="2.200" y="2.200" width="14.400" height="6.500" rx="2.400" fill="#fbea94" opacity=".85"/><text x="4.300" y="13.300" font-family="Liberation Serif, serif" font-style="italic" font-weight="bold" font-size="13.500" fill="#b08a1c">f</text><path d="M14.7 10.0 L18.799999999999997 14.1 L14.7 18.2 L10.6 14.1 Z" fill="#f6d84c" stroke="#b5850d" stroke-width="1.300" stroke-linejoin="round"/><path d="M14.7 11.6 L17.199999999999996 14.1 L14.7 15.1 L12.2 14.1 Z" fill="#fbe98c"/></svg>
<span id="t55" class="t" style="left:89px;top:458.8px;font-size:15.4px;color:#000;transform:scaleX(0.9479) skewX(0.05deg);transform-origin:left center;">SpreadLog _renew</span>
<div style="left:47px;top:492px;width:14px;height:1px;background:repeating-linear-gradient(90deg,#9a9a9a 0 1px,transparent 1px 2px)"></div>
<svg style="left:62px;top:482px" width="20" height="20" viewBox="0 0 20 20" ><rect x="0.900" y="0.900" width="17" height="16.300" rx="3.200" fill="#f4d24a" stroke="#c3961a" stroke-width="1.300"/><rect x="2.200" y="2.200" width="14.400" height="6.500" rx="2.400" fill="#fbea94" opacity=".85"/><text x="4.300" y="13.300" font-family="Liberation Serif, serif" font-style="italic" font-weight="bold" font-size="13.500" fill="#b08a1c">f</text><path d="M14.7 10.0 L18.799999999999997 14.1 L14.7 18.2 L10.6 14.1 Z" fill="#f6d84c" stroke="#b5850d" stroke-width="1.300" stroke-linejoin="round"/><path d="M14.7 11.6 L17.199999999999996 14.1 L14.7 15.1 L12.2 14.1 Z" fill="#fbe98c"/></svg>
<span id="t56" class="t" style="left:89px;top:480.8px;font-size:15.4px;color:#000;transform:scaleX(0.9643) skewX(0.05deg);transform-origin:left center;">Stochastic</span>
<div style="left:47px;top:514px;width:14px;height:1px;background:repeating-linear-gradient(90deg,#9a9a9a 0 1px,transparent 1px 2px)"></div>
<svg style="left:62px;top:504px" width="20" height="20" viewBox="0 0 20 20" ><rect x="0.900" y="0.900" width="17" height="16.300" rx="3.200" fill="#f4d24a" stroke="#c3961a" stroke-width="1.300"/><rect x="2.200" y="2.200" width="14.400" height="6.500" rx="2.400" fill="#fbea94" opacity=".85"/><text x="4.300" y="13.300" font-family="Liberation Serif, serif" font-style="italic" font-weight="bold" font-size="13.500" fill="#b08a1c">f</text><path d="M14.7 10.0 L18.799999999999997 14.1 L14.7 18.2 L10.6 14.1 Z" fill="#f6d84c" stroke="#b5850d" stroke-width="1.300" stroke-linejoin="round"/><path d="M14.7 11.6 L17.199999999999996 14.1 L14.7 15.1 L12.2 14.1 Z" fill="#fbe98c"/></svg>
<span id="t57" class="t" style="left:89px;top:502.79999999999995px;font-size:15.4px;color:#000;transform:scaleX(1.0182) skewX(0.05deg);transform-origin:left center;">ZigZag</span>
<div style="left:27px;top:537px;width:7px;height:1px;background:repeating-linear-gradient(90deg,#9a9a9a 0 1px,transparent 1px 2px)"></div>
<div style="left:15px;top:532px;width:11px;height:11px;background:linear-gradient(180deg,#fff 40%,#e6e6e6);border:1px solid #8f8f8f;border-radius:2px"></div>
<div style="left:17px;top:537px;width:7px;height:1px;background:#24408a"></div>
<div style="left:20px;top:534px;width:1px;height:7px;background:#24408a"></div>
<div style="left:27px;top:559px;width:7px;height:1px;background:repeating-linear-gradient(90deg,#9a9a9a 0 1px,transparent 1px 2px)"></div>
<div style="left:15px;top:554px;width:11px;height:11px;background:linear-gradient(180deg,#fff 40%,#e6e6e6);border:1px solid #8f8f8f;border-radius:2px"></div>
<div style="left:17px;top:559px;width:7px;height:1px;background:#24408a"></div>
<div style="left:20px;top:556px;width:1px;height:7px;background:#24408a"></div>
<svg style="left:35px;top:524px" width="24" height="23" viewBox="0 0 24 23" ><path d="M6.300 11.500 h8.500 q0 5 -4.250 5 q-4.250 0 -4.250 -5z" fill="#f3d34a" stroke="#c79b1b" stroke-width=".8"/><ellipse cx="11.500" cy="8" rx="10.200" ry="4" fill="#4aa3df" stroke="#2f7fc0" stroke-width="1"/><path d="M6 7.600 C6 1.300 17 1.300 17 7.600 C14 9.300 9 9.300 6 7.600 Z" fill="#5ab0e8" stroke="#2f7fc0" stroke-width="1"/><path d="M8 4.500 q3 -2 6 -.5" stroke="#bfe2f8" stroke-width="1.200" fill="none"/><path d="M17.3 11.9 L21.700000000000003 16.3 L17.3 20.700000000000003 L12.9 16.3 Z" fill="#f6d84c" stroke="#b5850d" stroke-width="1.300" stroke-linejoin="round"/><path d="M17.3 13.5 L20.1 16.3 L17.3 17.3 L14.5 16.3 Z" fill="#fbe98c"/></svg>
<svg style="left:35px;top:546px" width="24" height="23" viewBox="0 0 24 23" ><rect x="3.600" y="3" width="11" height="12" fill="#f6df70" stroke="#c79b1b" stroke-width="1"/><rect x="1.500" y="2.300" width="15.400" height="3.200" rx="1.500" fill="#f3d34a" stroke="#c3961a" stroke-width="1"/><rect x="1.500" y="13" width="15.400" height="3.200" rx="1.500" fill="#f3d34a" stroke="#c3961a" stroke-width="1"/><path d="M6.500 7.500 h2 M10 7.500 h2 M6.500 10 h1.500 M10 10 h2" stroke="#b89a3a" stroke-width="1"/><path d="M14.4 11.899999999999999 L18.9 16.4 L14.4 20.9 L9.9 16.4 Z" fill="#f6d84c" stroke="#b5850d" stroke-width="1.300" stroke-linejoin="round"/><path d="M14.4 13.499999999999998 L17.299999999999997 16.4 L14.4 17.4 L11.5 16.4 Z" fill="#fbe98c"/></svg>
<span id="t58" class="t" style="left:62.2px;top:524.5px;font-size:15.6px;color:#000;transform:scaleX(0.7365);transform-origin:left center;">エキスパートアドバイザ</span>
<span id="t59" class="t" style="left:62.2px;top:546.5px;font-size:15.6px;color:#000;transform:scaleX(0.6989);transform-origin:left center;">スクリプト</span>
<div style="left:5px;top:573px;width:435px;height:1px;background:#000"></div>
<div style="left:7px;top:573px;width:55px;height:25px;background:#fff;border:1px solid #000;border-top:1px solid #fff"></div>
<span id="t60" class="t" style="left:19.8px;top:573.5px;font-size:14.2px;color:#000;transform:scaleX(1.0468);transform-origin:left center;letter-spacing:0.9px;">全般</span>
<span id="t61" class="t" style="left:73.8px;top:573.5px;font-size:14.2px;color:#6d6d6d;transform:scaleX(0.8946);transform-origin:left center;letter-spacing:0.9px;">お気に入り</span>
<div style="left:151px;top:577px;width:1px;height:18px;background:#6d6d6d"></div>
<div style="left:446px;top:100px;width:398px;height:500px;background:#000;border-left:1px solid #a0a0a0;border-top:1px solid #696969"></div>
<div style="left:447px;top:100px;width:1px;height:500px;background:#696969"></div>
<svg style="left:0;top:0" width="844" height="600" viewBox="0 0 844 600" shape-rendering="crispEdges"><g fill="#fff"><rect x="450" y="103" width="394" height="1"/><rect x="450" y="103" width="1" height="479"/><rect x="450" y="421" width="394" height="1"/><rect x="450" y="423" width="394" height="1"/><rect x="450" y="581" width="394" height="1"/><rect x="451" y="582" width="1" height="3"/><rect x="547" y="582" width="1" height="3"/><rect x="643" y="582" width="1" height="3"/><rect x="739" y="582" width="1" height="3"/><rect x="835" y="582" width="1" height="3"/></g><g stroke="#778899" stroke-width="1" stroke-dasharray="3 3" fill="none"><path d="M452 108.5 H844"/><path d="M452 157.5 H844"/><path d="M452 206.5 H844"/><path d="M452 255.5 H844"/><path d="M452 304.5 H844"/><path d="M452 353.5 H844"/><path d="M452 402.5 H844"/><path d="M499.5 103 V421"/><path d="M499.5 424 V581" stroke-dashoffset="3"/><path d="M547.5 103 V421"/><path d="M547.5 424 V581" stroke-dashoffset="3"/><path d="M595.5 103 V421"/><path d="M595.5 424 V581" stroke-dashoffset="3"/><path d="M643.5 103 V421"/><path d="M643.5 424 V581" stroke-dashoffset="3"/><path d="M691.5 103 V421"/><path d="M691.5 424 V581" stroke-dashoffset="3"/><path d="M739.5 103 V421"/><path d="M739.5 424 V581" stroke-dashoffset="3"/><path d="M787.5 103 V421"/><path d="M787.5 424 V581" stroke-dashoffset="3"/><path d="M835.5 103 V421"/><path d="M835.5 424 V581" stroke-dashoffset="3"/></g><rect x="451" y="391" width="393" height="1" fill="#778899"/><g stroke="#2fd62f" stroke-width="1" stroke-dasharray="9 6 3 6" fill="none"><path d="M451 146.5 H844"/><path d="M451 154.5 H844"/></g><g fill="#00ff00"><rect x="579" y="154" width="1" height="17"/><rect x="577" y="162" width="5" height="2"/><rect x="587" y="152" width="1" height="14"/><rect x="585" y="160" width="5" height="4"/><rect x="586" y="161" width="3" height="2" fill="#000"/><rect x="595" y="146" width="1" height="20"/><rect x="593" y="160" width="5" height="3"/><rect x="594" y="161" width="3" height="1" fill="#fff"/><rect x="603" y="143" width="1" height="22"/><rect x="601" y="145" width="5" height="18"/><rect x="602" y="146" width="3" height="16" fill="#000"/><rect x="611" y="142" width="1" height="20"/><rect x="609" y="145" width="5" height="12"/><rect x="610" y="146" width="3" height="10" fill="#fff"/><rect x="619" y="151" width="1" height="9"/><rect x="617" y="154" width="5" height="4"/><rect x="618" y="155" width="3" height="2" fill="#000"/><rect x="627" y="149" width="1" height="11"/><rect x="625" y="154" width="5" height="2"/><rect x="635" y="152" width="1" height="28"/><rect x="633" y="154" width="5" height="9"/><rect x="634" y="155" width="3" height="7" fill="#fff"/><rect x="643" y="160" width="1" height="18"/><rect x="641" y="162" width="5" height="9"/><rect x="642" y="163" width="3" height="7" fill="#fff"/><rect x="651" y="168" width="1" height="13"/><rect x="649" y="170" width="5" height="7"/><rect x="650" y="171" width="3" height="5" fill="#fff"/><rect x="659" y="167" width="1" height="19"/><rect x="657" y="172" width="5" height="5"/><rect x="658" y="173" width="3" height="3" fill="#000"/><rect x="667" y="168" width="1" height="9"/><rect x="665" y="172" width="5" height="3"/><rect x="666" y="173" width="3" height="1" fill="#fff"/><rect x="675" y="179" width="1" height="22"/><rect x="673" y="182" width="5" height="8"/><rect x="674" y="183" width="3" height="6" fill="#fff"/><rect x="683" y="179" width="1" height="11"/><rect x="681" y="181" width="5" height="9"/><rect x="682" y="182" width="3" height="7" fill="#000"/><rect x="691" y="171" width="1" height="18"/><rect x="689" y="180" width="5" height="2"/><rect x="699" y="173" width="1" height="12"/><rect x="697" y="180" width="5" height="2"/><rect x="707" y="172" width="1" height="12"/><rect x="705" y="176" width="5" height="5"/><rect x="706" y="177" width="3" height="3" fill="#000"/><rect x="715" y="171" width="1" height="7"/><rect x="713" y="175" width="5" height="2"/><rect x="723" y="166" width="1" height="18"/><rect x="721" y="178" width="5" height="2"/><rect x="731" y="173" width="1" height="10"/><rect x="729" y="173" width="5" height="8"/><rect x="730" y="174" width="3" height="6" fill="#000"/><rect x="739" y="154" width="1" height="42"/><rect x="737" y="174" width="5" height="15"/><rect x="738" y="175" width="3" height="13" fill="#fff"/><rect x="747" y="179" width="1" height="21"/><rect x="745" y="184" width="5" height="5"/><rect x="746" y="185" width="3" height="3" fill="#000"/><rect x="755" y="173" width="1" height="16"/><rect x="753" y="179" width="5" height="6"/><rect x="754" y="180" width="3" height="4" fill="#000"/><rect x="763" y="166" width="1" height="14"/><rect x="761" y="172" width="5" height="8"/><rect x="762" y="173" width="3" height="6" fill="#000"/><rect x="771" y="166" width="1" height="18"/><rect x="769" y="172" width="5" height="8"/><rect x="770" y="173" width="3" height="6" fill="#fff"/><rect x="779" y="168" width="1" height="15"/><rect x="777" y="169" width="5" height="11"/><rect x="778" y="170" width="3" height="9" fill="#000"/><rect x="787" y="167" width="1" height="19"/><rect x="785" y="169" width="5" height="9"/><rect x="786" y="170" width="3" height="7" fill="#fff"/><rect x="795" y="174" width="1" height="15"/><rect x="793" y="177" width="5" height="6"/><rect x="794" y="178" width="3" height="4" fill="#fff"/><rect x="803" y="165" width="1" height="18"/><rect x="801" y="172" width="5" height="11"/><rect x="802" y="173" width="3" height="9" fill="#000"/><rect x="811" y="156" width="1" height="18"/><rect x="809" y="167" width="5" height="6"/><rect x="810" y="168" width="3" height="4" fill="#000"/><rect x="819" y="158" width="1" height="13"/><rect x="817" y="164" width="5" height="5"/><rect x="818" y="165" width="3" height="3" fill="#000"/><rect x="827" y="148" width="1" height="17"/><rect x="825" y="149" width="5" height="16"/><rect x="826" y="150" width="3" height="14" fill="#000"/><rect x="835" y="142" width="1" height="12"/><rect x="833" y="149" width="5" height="2"/><rect x="843" y="143" width="1" height="14"/><rect x="841" y="149" width="5" height="2"/></g><g stroke="#c8c8c8" stroke-width="1" stroke-dasharray="3 2" fill="none"><path d="M451 466.5 H844"/><path d="M451 493.5 H844"/><path d="M451 520.5 H844"/></g><polyline points="451.5,472.4 459.5,476.4 467.5,471 475.5,468 483.5,462 491.5,441.4 499.5,438.4 507.5,454.4 515.5,455.6 523.5,459.4 531.5,460.6 539.5,465 547.5,479.4 555.5,495 563.5,506.4 571.5,506.4 579.5,512.4 587.5,510.4 595.5,510.4 603.5,498.4 611.5,501 619.5,502.4 627.5,499.4 635.5,516 643.5,526.5 651.5,541.3 659.5,532.8 667.5,521.3 675.5,546.7 683.5,524.7 691.5,514.2 699.5,511 707.5,506 715.5,498.4 723.5,501.4 731.5,496.4 739.5,502 747.5,530 755.5,497 763.5,465 771.5,480.4 779.5,465.6 787.5,483 795.5,514 803.5,463 811.5,434 819.5,444.4 827.5,432.4 835.5,440 843.5,457 851.5,470" fill="none" stroke="#22bcb4" stroke-width="1.150" shape-rendering="geometricPrecision"/></svg>
<div id="chart" style="left:448px;top:101px;width:396px;height:499px;overflow:hidden">
<span id="t62" class="t" style="left:16px;top:0.5px;font-size:13px;color:#fff;">USDJPY,H4 152.578 153.056 152.515 152.626</span>
<span id="t63" class="t" style="right:265.5px;top:13.5px;font-size:13px;color:#fff;transform:scaleX(0.8412);transform-origin:right center;">ADAUSD,AL</span><span id="t64" class="t" style="left:131.29999999999995px;top:13.5px;font-size:13px;color:#fff;transform:scaleX(0.8719);transform-origin:left center;">GOUSD,AUDCAD,AUDCHF,AUDJPY,AUDNZD,AUDUSD</span>
<span id="t65" class="t" style="left:7.5px;top:322.0px;font-size:13px;color:#fff;transform:scaleX(0.9464);transform-origin:left center;">CCI(14) -104.1161</span>
<span id="t66" class="t" style="left:2.4px;top:479.5px;font-size:13px;color:#fff;transform:scaleX(0.9584);transform-origin:left center;">12 Jan 2026</span>
<span id="t67" class="t" style="left:98.4px;top:479.5px;font-size:13px;color:#fff;transform:scaleX(0.9390);transform-origin:left center;">14 Jan 08:00</span>
<span id="t68" class="t" style="left:194.4px;top:479.5px;font-size:13px;color:#fff;transform:scaleX(0.9390);transform-origin:left center;">16 Jan 08:00</span>
<span id="t69" class="t" style="left:290.4px;top:479.5px;font-size:13px;color:#fff;transform:scaleX(0.9390);transform-origin:left center;">20 Jan 08:00</span>
<span id="t70" class="t" style="left:386.4px;top:479.5px;font-size:13px;color:#fff;transform:scaleX(0.9390);transform-origin:left center;">22 Jan 08:00</span>
</div>
<div style="left:333px;top:6px;width:71px;height:25px;background:#f6f6f6;border:1px solid #7a7a7a;border-bottom:none"></div>
<span id="t71" class="t" style="left:340.8px;top:6.5px;font-size:15.6px;color:#000;transform:scaleX(0.7394);transform-origin:left center;">ツール</span>
<span id="t72" class="t" style="left:378.8px;top:6.5px;font-size:15.4px;color:#000;transform:scaleX(0.9148) skewX(0.05deg);transform-origin:left center;">(T)</span>
<div style="left:333px;top:29px;width:242px;height:170px;background:#fff;border:1px solid #808080;box-shadow:2px 2px 4px rgba(0,0,0,.6)"></div>
<div style="left:334px;top:30px;width:33px;height:168px;background:#f1f1f1"></div>
<div style="left:334px;top:29px;width:69px;height:2px;background:#f1f1f1"></div>
<div style="left:377px;top:66px;width:196px;height:1px;background:#e2e2e2"></div>
<div style="left:377px;top:163px;width:196px;height:1px;background:#e2e2e2"></div>
<span id="t73" class="t" style="left:376.8px;top:34.7px;font-size:14.2px;color:#000;letter-spacing:0.9px;">新規注文</span>
<span id="t74" class="t" style="left:441.2px;top:34.7px;font-size:15.4px;color:#000;transform:scaleX(0.9815) skewX(0.05deg);transform-origin:left center;">(N)</span>
<span id="t75" class="t" style="left:376.4px;top:74.7px;font-size:15.6px;color:#000;transform:scaleX(0.6804);transform-origin:left center;">ヒストリーセンター</span>
<span id="t76" class="t" style="left:477px;top:74.7px;font-size:15.4px;color:#000;transform:scaleX(0.9815) skewX(0.05deg);transform-origin:left center;">(H)</span>
<span id="t77" class="t" style="left:376.8px;top:102.2px;font-size:15.6px;color:#000;transform:scaleX(0.7170);transform-origin:left center;">グローバル</span><span id="t78" class="t" style="left:432.5px;top:102.2px;font-size:14.2px;color:#000;letter-spacing:0.9px;">変数</span>
<span id="t79" class="t" style="left:467.4px;top:102.2px;font-size:15.4px;color:#000;transform:scaleX(0.9245) skewX(0.05deg);transform-origin:left center;">(V)</span>
<span id="t80" class="t" style="left:376.6px;top:130.4px;font-size:15.6px;color:#000;transform:scaleX(0.7032);transform-origin:left center;">メタエディター</span>
<span id="t81" class="t" style="left:456.2px;top:130.4px;font-size:15.4px;color:#000;transform:scaleX(0.8564) skewX(0.05deg);transform-origin:left center;">(E)</span>
<span id="t82" class="t" style="left:376.8px;top:171.3px;font-size:15.6px;color:#000;transform:scaleX(0.6745);transform-origin:left center;">オプション</span>
<span id="t83" class="t" style="left:434.4px;top:171.3px;font-size:15.4px;color:#000;transform:scaleX(0.9076) skewX(0.05deg);transform-origin:left center;">(O)</span>
<span id="t84" class="t" style="left:543px;top:34.7px;font-size:15.4px;color:#000;transform:scaleX(0.8894) skewX(0.05deg);transform-origin:left center;">F9</span>
<span id="t85" class="t" style="left:543px;top:74.7px;font-size:15.4px;color:#000;transform:scaleX(0.8894) skewX(0.05deg);transform-origin:left center;">F2</span>
<span id="t86" class="t" style="left:543px;top:102.2px;font-size:15.4px;color:#000;transform:scaleX(0.8894) skewX(0.05deg);transform-origin:left center;">F3</span>
<span id="t87" class="t" style="left:543px;top:130.4px;font-size:15.4px;color:#000;transform:scaleX(0.8894) skewX(0.05deg);transform-origin:left center;">F4</span>
<span id="t88" class="t" style="left:514px;top:171.3px;font-size:15.4px;color:#000;transform:scaleX(1.0239) skewX(0.05deg);transform-origin:left center;">Ctrl+O</span>
<svg style="left:339.5px;top:35.5px" width="21.0" height="23.0" viewBox="0 0 21 23"><path d="M1.500 1.500 h8.300 l3.800 3.800 v11.200 h-12.100 z" fill="#fdfdfd" stroke="#7a7a7a" stroke-width="1.200" stroke-linejoin="round"/><path d="M9.800 1.500 v3.800 h3.800" fill="#d8d8d8" stroke="#7a7a7a" stroke-width="1"/><path d="M3.800 5.200 h3.500 M3.800 8.200 h7 M3.800 11 h5" stroke="#5a5a5a" stroke-width="1.300"/><path d="M10.7 9.0 h3.6 v4.0 h4.0 v3.6 h-4.0 v4.0 h-3.6 v-4.0 h-4.0 v-3.6 h4.0 z" fill="#25cc25" stroke="#109010" stroke-width="1"/><path d="M11.899999999999999 10.2 v4.0 M7.9 14.2 h4.0" stroke="#7df07d" stroke-width="1.200" fill="none" opacity=".8"/></svg>
<svg style="left:339px;top:75px" width="22" height="22" viewBox="0 0 22 22" ><rect x="1.4" y="8.0" width="12.4" height="7.3" rx="2.200" fill="#4ccf35" stroke="#2f9a1e" stroke-width=".9"/><rect x="2.5999999999999996" y="10.0" width="10.0" height="1.600" fill="#a6f09a" opacity=".8"/><rect x="1.4" y="1.7" width="12.4" height="7.3" rx="2.200" fill="#ecc81c" stroke="#b8950c" stroke-width=".9"/><rect x="2.5999999999999996" y="2.7" width="10.0" height="2" rx="1" fill="#fbe878" opacity=".9"/><rect x="6.2" y="12.0" width="13.6" height="8.3" rx="2.200" fill="#4ccf35" stroke="#2f9a1e" stroke-width=".9"/><rect x="7.4" y="14.0" width="11.2" height="1.600" fill="#a6f09a" opacity=".8"/><rect x="6.2" y="5.2" width="13.6" height="7.8" rx="2.200" fill="#ecc81c" stroke="#b8950c" stroke-width=".9"/><rect x="7.4" y="6.2" width="11.2" height="2" rx="1" fill="#fbe878" opacity=".9"/></svg>
<svg style="left:340px;top:105px" width="21" height="20" viewBox="0 0 21 20" ><rect x="7" y="2" width="6.600" height="6.400" rx="1.700" fill="#2fd21f" stroke="#2a9a18" stroke-width="1"/><rect x="2" y="11" width="6.600" height="6.400" rx="1.700" fill="#f2e61c" stroke="#b8a80c" stroke-width="1"/><rect x="12.4" y="11" width="6.600" height="6.400" rx="1.700" fill="#1cc8f2" stroke="#1a8fc4" stroke-width="1"/></svg>
<svg style="left:337px;top:130px" width="24" height="23" viewBox="0 0 24 23" ><path d="M2 13.500 L9.300 2.500 Q15.500 5.500 21.600 11 L13 19 Q7.500 15.500 2 13.500 Z" fill="#e3b93a" stroke="#b38a18" stroke-width="1.100" stroke-linejoin="round"/><path d="M5 12.500 L10 4.800 Q14.500 7 18.600 10.800 L12.600 16.200 Q8.500 13.800 5 12.500 Z" fill="#f7e080"/><path d="M2 13.500 Q7.500 15.500 13 19 L21.600 11 L21.600 12.600 L13.200 20.600 Q7.500 17 2 15.200 Z" fill="#c9992a" stroke="#a97f14" stroke-width=".7"/></svg>
<svg style="left:337px;top:169px" width="25" height="26" viewBox="0 0 25 26" ><circle cx="9" cy="6.400" r="4.300" fill="#f0c63c" stroke="#b78d12"/><path d="M3 14.500 q0 -4.500 6 -4.500 q6 0 6 4.500 z" fill="#f0c63c" stroke="#b78d12"/><circle cx="5.500" cy="15.800" r="4.400" fill="#3ecb3e" stroke="#1e9a1e"/><circle cx="4.300" cy="14.300" r="1.500" fill="#9df09d"/><g transform="translate(15.600,16.400)"><path d="M0 -7 L1.600 -4.500 L4.500 -5.500 L4.300 -2.500 L7 -1 L5 1 L6.200 3.800 L3.200 3.800 L2 6.800 L0 4.800 L-2 6.800 L-3.200 3.800 L-6.200 3.800 L-5 1 L-7 -1 L-4.300 -2.500 L-4.500 -5.500 L-1.600 -4.500 Z" fill="#f6e65a" stroke="#c4a81c" stroke-width=".9" stroke-linejoin="round"/><circle r="1.800" fill="#2fae2f"/></g></svg>
<svg style="left:0;top:0" width="844" height="600" viewBox="0 0 844 600"><g fill="none" stroke="#ec6a1e" stroke-width="2.700"><rect x="338.400" y="5.350" width="61.200" height="24.150" stroke-dasharray="8.300 3.900"/><rect x="367.450" y="168.150" width="98.200" height="26.200" stroke-dasharray="8.200 4.100"/></g></svg>
</body></html>
